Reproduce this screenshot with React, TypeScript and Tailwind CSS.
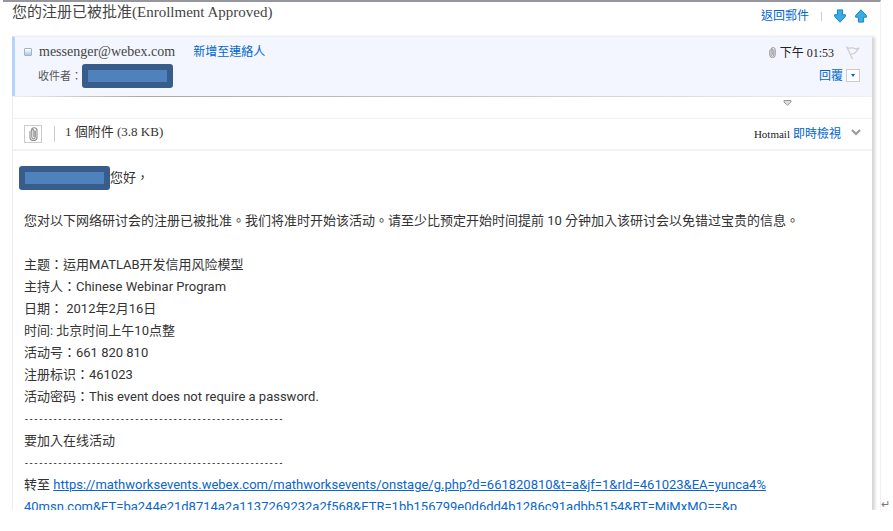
import type { ReactNode } from "react"

const details = [
  "主题：运用MATLAB开发信用风险模型",
  "主持人：Chinese Webinar Program",
  "日期： 2012年2月16日",
  "时间: 北京时间上午10点整",
  "活动号：661 820 810",
  "注册标识：461023",
  "活动密码：This event does not require a password.",
]

const serif = "font-['Liberation_Serif','Noto_Sans_CJK_TC',serif]"
const sans = "font-['Roboto','Noto_Sans_CJK_TC',sans-serif]"

function Redacted() {
  return (
    <span className="block h-6 w-[91px] shrink-0 rounded-[3px] border-[6px] border-[#385d8a] bg-[#4f81bd]" />
  )
}

function Dashes() {
  return <p className="font-['Liberation_Mono',monospace] text-[8px] leading-[22px] font-bold">{"-".repeat(54)}</p>
}

function Clip({ className }: { className?: string }) {
  return (
    <svg viewBox="0 0 10 16" className={className} fill="none" stroke="#8f8f8f" strokeWidth="1.3" strokeLinecap="round">
      <path d="M7 4.5v7a2 2 0 0 1-4 0V4a1.2 1.2 0 0 1 2.4 0v7" />
      <path d="M1 5v6.5a4 4 0 0 0 8 0V4a3.2 3.2 0 0 0-6.4 0" />
    </svg>
  )
}

function Arrow({ up }: { up?: boolean }) {
  return (
    <svg viewBox="0 0 12 14" className={up ? "h-[14px] w-3" : "h-[14px] w-3 rotate-180"}>
      <path
        d="M6 .8 11.4 6.6v1.6H8.6v4.9H3.4V8.2H.6V6.6Z"
        fill="#35aee8"
        stroke="#1d83bd"
        strokeWidth="1"
        strokeLinejoin="round"
      />
    </svg>
  )
}

function TextLink({ children }: { children: ReactNode }) {
  return (
    <a href="#" className="text-[#0066cc]">
      {children}
    </a>
  )
}

export default function App() {
  return (
    <div className={`flex items-end bg-white text-[13px] leading-[22px] text-[#333] ${sans}`} lang="zh-Hant">
      <main className="ml-[3px] min-w-0 flex-1 border-t-2 border-r border-t-[#96969e] border-r-[#f0f0f0] pr-2 pl-[9px]">
        <header className={`flex h-[34px] items-start justify-between ${serif}`}>
          <h1 className="text-[15px] leading-5 text-[#444]">您的注册已被批准(Enrollment Approved)</h1>
          <nav className="flex items-center pt-[3px] pr-[5px] text-xs leading-[22px]">
            <TextLink>返回郵件</TextLink>
            <span className="mr-3 ml-3 h-[9px] w-px bg-[#ccc]" />
            <button type="button" aria-label="Next message" className="mr-[9px]">
              <Arrow />
            </button>
            <button type="button" aria-label="Previous message">
              <Arrow up />
            </button>
          </nav>
        </header>

        <article className="border-l border-[#ececec] shadow-[3px_1px_3px_#d4d4d4]">
          <section
            className={`-ml-px flex h-[60px] justify-between border-t border-l-[3px] border-t-[#ebeef5] border-l-[#b5d3fb] bg-[#f3f6fe] pt-1 pr-3 pl-[9px] ${serif}`}
          >
            <div>
              <div className="flex items-center">
                <span className="size-2 rounded-[1px] border border-[#9fb4cb] bg-linear-to-b from-white to-[#a9c8e6]" />
                <span className="ml-[7px] text-[14px] text-[#444]">messenger@webex.com</span>
                <span className="ml-[18px] text-xs">
                  <TextLink>新增至連絡人</TextLink>
                </span>
              </div>
              <div className="flex items-center pt-px pl-[14px] text-[11px] text-[#555]">
                收件者：
                <Redacted />
              </div>
            </div>
            <div>
              <div className="flex h-[23px] items-center justify-end text-xs text-[#222]">
                <Clip className="mr-1 h-[11px] w-[7px]" />
                下午 01:53
                <svg viewBox="0 0 14 14" className="ml-3 size-[14px]" fill="none" stroke="#ccc" strokeWidth="1.2">
                  <path d="M6.5 13 1 1.5C4 3.5 5.5.8 8 2.2s3.500.8 5-.4L9 7c-1.500.9-3 .6-4.500 1.400" />
                </svg>
              </div>
              <div className="flex h-[23px] items-center justify-end text-xs">
                <TextLink>回覆</TextLink>
                <button
                  type="button"
                  aria-label="Reply options"
                  className="ml-[3px] flex h-[13px] w-[14px] items-center justify-center border border-[#ccc] bg-white"
                >
                  <svg viewBox="0 0 4 3" className="h-[3px] w-1">
                    <path d="M0 0h4L2 3Z" fill="#0066cc" />
                  </svg>
                </button>
              </div>
            </div>
          </section>
          <div className="h-px bg-linear-to-r from-[#f0f0f0] via-[#a8a8a8] via-15% to-[#f0f0f0]" />

          <div className="flex h-[22px] justify-end border-b border-[#f0f0f0] pt-[3px] pr-20">
            <svg viewBox="0 0 9 6" className="h-[6px] w-[9px]">
              <path d="M1 .5h7v1.500L4.500 5.300 1 2Z" fill="#ddd" stroke="#999" />
            </svg>
          </div>

          <section className={`flex h-8 justify-between border-b-2 border-[#f2f2f2] pr-[11px] pl-[11px] ${serif}`}>
            <div className="flex items-center">
              <span className="flex h-[18px] w-[18px] items-center justify-center border border-[#ccc]">
                <Clip className="h-[14px] w-[9px]" />
              </span>
              <span className="mr-[10px] ml-3 h-4 w-px bg-[#ccc]" />
              <span className="pb-1">1 個附件 (3.8 KB)</span>
            </div>
            <div className="flex items-center text-xs text-[#222]">
              <span className="text-[11px]">Hotmail</span>
              <span className="ml-[3px]">
                <TextLink>即時檢視</TextLink>
              </span>
              <button type="button" aria-label="Show attachment" className="ml-[10px] pb-1">
                <svg viewBox="0 0 10 7" className="h-[7px] w-[10px]" fill="none" stroke="#999" strokeWidth="2">
                  <path d="m1 1 4 4 4-4" />
                </svg>
              </button>
            </div>
          </section>

          <section className="pt-[15px] pr-4 pl-[11px]">
            <div className="-ml-[5px] flex items-center">
              <Redacted />
              您好，
            </div>
            <p className="mt-5 mb-[22px]">
              您对以下网络研讨会的注册已被批准。我们将准时开始该活动。请至少比预定开始时间提前 10
              分钟加入该研讨会以免错过宝贵的信息。
            </p>
            {details.map((line) => (
              <p key={line}>{line}</p>
            ))}
            <Dashes />
            <p>要加入在线活动</p>
            <Dashes />
            <p className="max-h-9 overflow-hidden">
              转至{" "}
              <a href="#" className="text-[#0a66cc] underline">
                https://mathworksevents.webex.com/mathworksevents/onstage/g.php?d=661820810&t=a&jf=1&rId=461023&EA=yunca4%
                <br />
                40msn.com&ET=ba244e21d8714a2a1137269232a2f568&ETR=1bb156799e0d6dd4b1286c91adbb5154&RT=MiMxMQ==&p
              </a>
            </p>
          </section>
        </article>
      </main>
      <span className="w-3 text-[11px] leading-[10px] text-[#777]">↵</span>
    </div>
  )
}
